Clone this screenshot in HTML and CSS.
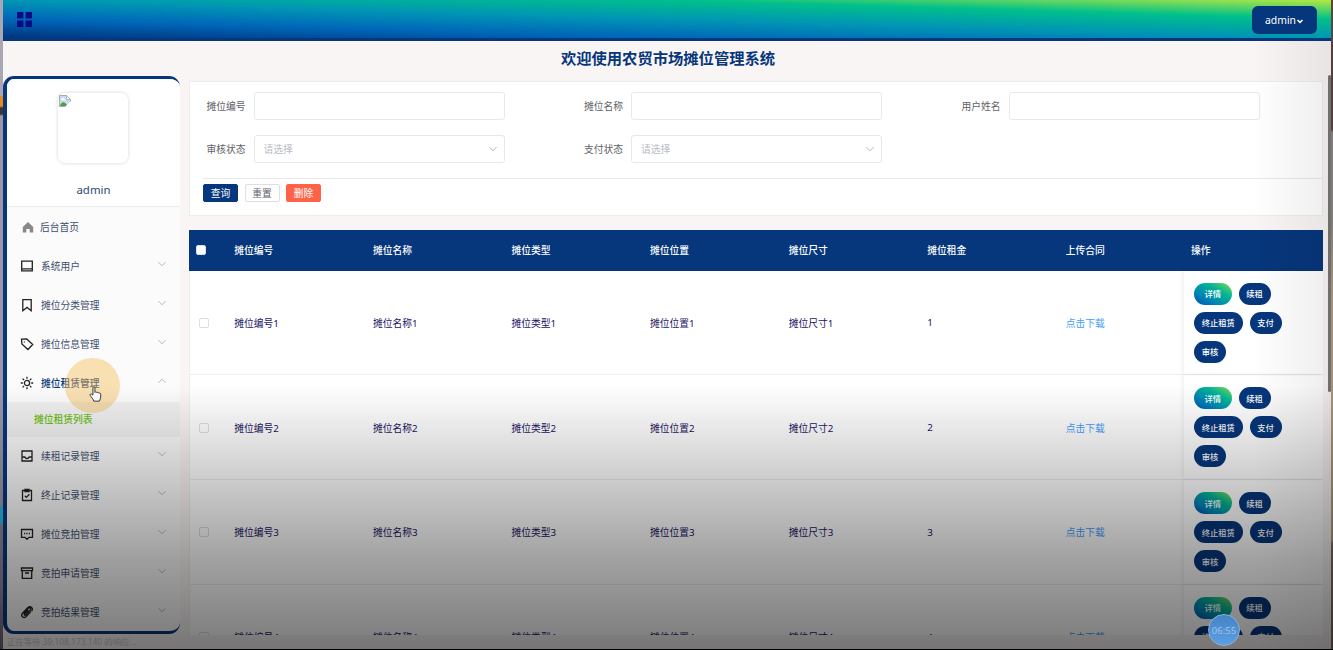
FILE: index.html
```html
<!DOCTYPE html>
<html lang="zh-CN">
<head>
    <meta charset="UTF-8" />
    <meta name="viewport" content="width=device-width, initial-scale=1" />
    <title>农贸市场摊位管理系统</title>
    <link rel="stylesheet" href="styles.css">
</head>
<body>
<div class="page">
    <header class="topbar">
        <svg class="grid-icon" viewBox="0 0 15 15"><path d="M0 0h6.4v6.4H0zM8.6 0H15v6.4H8.6zM0 8.6h6.4V15H0zM8.6 8.6H15V15H8.6z"/></svg>
        <button class="user-btn">admin<svg viewBox="0 0 8 8"><path d="M1.5 3L4 5.4 6.5 3"/></svg></button>
    </header>
    <h1 class="welcome">欢迎使用农贸市场摊位管理系统</h1>

    <div class="layout">
        <aside class="sidebar">
            <div class="profile">
                <div class="avatar">
                    <svg viewBox="0 0 12 12">
                        <path d="M.5.5h7l4 4v7H.5z" fill="#c9daf5" stroke="#9a9a9a" stroke-width=".8"/>
                        <path d="M1 11c1-4 4-5 6-2l2 2z" fill="#4aa33a"/>
                        <path d="M2 4.5c0-2 3-2 3.500-.6 1.500 0 1.300 1.400.3 1.400H2.500z" fill="#fff"/>
                        <path d="M7.500.5v4h4z" fill="#fff" stroke="#9a9a9a" stroke-width=".6"/>
                        <path d="M12 6L6 12h6z" fill="#fff"/>
                    </svg>
                </div>
                <p>admin</p>
            </div>
            <nav class="menu" id="menu"></nav>
        </aside>

        <main class="content">
            <form class="search">
                <div class="fields">
                    <div class="field"><label>摊位编号</label><span class="input"></span></div>
                    <div class="field"><label>摊位名称</label><span class="input"></span></div>
                    <div class="field"><label>用户姓名</label><span class="input"></span></div>
                    <div class="field"><label>审核状态</label><span class="input">请选择<svg class="arrow" viewBox="0 0 8 8"><path d="M.5 2.200L4 5.800 7.500 2.200"/></svg></span></div>
                    <div class="field"><label>支付状态</label><span class="input">请选择<svg class="arrow" viewBox="0 0 8 8"><path d="M.5 2.200L4 5.800 7.500 2.200"/></svg></span></div>
                </div>
                <div class="actions">
                    <button type="button" class="btn primary">查询</button>
                    <button type="button" class="btn">重置</button>
                    <button type="button" class="btn danger">删除</button>
                </div>
            </form>

            <div class="table" id="table">
                <div class="row head">
                    <span><i class="check"></i></span>
                    <span>摊位编号</span>
                    <span>摊位名称</span>
                    <span>摊位类型</span>
                    <span>摊位位置</span>
                    <span>摊位尺寸</span>
                    <span>摊位租金</span>
                    <span>上传合同</span>
                    <span class="ops">操作</span>
                </div>
            </div>
        </main>
    </div>
</div>

<div class="edge left"></div>
<div class="edge right"></div>
<div class="scrollbar"></div>
<div class="click-spot"></div>
<svg class="cursor" viewBox="0 0 12 15"><path d="M3.600 8.500V1.700c0-1.500 1.900-1.500 1.900 0V6c.3-.8 1.700-.6 1.800.3.500-.7 1.700-.4 1.800.5.700-.5 1.800-.1 1.800.9v2.600c0 1.600-.8 2.200-1.200 3.900H4.400C4.200 12.500 1.800 10.400 1 8.700.5 7.600 1.900 7 2.600 7.800z"/></svg>
<div class="status">正在等待 39.108.173.140 的响应...</div>
<div class="shade"></div>
<div class="timer">06:55</div>

<script src="script.js"></script>
</body>
</html>
```
FILE: styles.css
```css
* {
    margin: 0;
    padding: 0;
    box-sizing: border-box;
}
html, body {
    width: 1333px;
    height: 650px;
    overflow: hidden;
}
body {
    position: relative;
    background: #f9f5f4;
    color: #606266;
    font-family: "Noto Sans", "Noto Sans CJK SC", sans-serif;
    font-size: 9.75px;
}
button {
    font-family: inherit;
    border: 0;
}
svg {
    display: block;
}
.page {
    height: 635px;
    padding: 0 2px 0 3px;
    overflow: hidden;
}
.topbar {
    height: 41px;
    display: flex;
    align-items: flex-start;
    justify-content: space-between;
    padding: 6px 14px 0;
    border-bottom: 3px solid #06367b;
    background: linear-gradient(to top right, #00347c 0%, #0066b8 25%, #0096b4 50%, #00c08a 75%, #b4e840 100%);
}
.grid-icon {
    width: 15px;
    height: 15px;
    margin-top: 6px;
    fill: #0b0b86;
}
.user-btn {
    display: flex;
    align-items: center;
    justify-content: center;
    width: 65px;
    height: 28px;
    padding-bottom: 1px;
    border-radius: 6px;
    background: #06367b;
    color: #fff;
    font-size: 10.4px;
}
.user-btn svg {
    width: 8px;
    height: 8px;
    margin-top: 2px;
    fill: none;
    stroke: #fff;
    stroke-width: 1.5;
}
.welcome {
    height: 35px;
    line-height: 35px;
    text-align: center;
    font-size: 15.3px;
    font-weight: bold;
    color: #06367b;
    padding-left: 2px;
}
.layout {
    display: flex;
    align-items: flex-start;
    gap: 9px;
}

/* sidebar */
.sidebar {
    width: 177px;
    height: 558px;
    overflow: hidden;
    border: solid #06367b;
    border-width: 3px 0 3px 4px;
    border-radius: 11px;
    background: #fbfbfb;
}
.profile {
    height: 128px;
    padding-top: 13px;
    background: #fff;
    border-bottom: 1px solid #ececec;
    text-align: center;
}
.profile p {
    margin-top: 17px;
    line-height: 18px;
    font-size: 11.4px;
    color: #2b4a76;
}
.avatar {
    width: 72px;
    height: 72px;
    margin: 0 auto;
    padding: 2px 1px;
    border: 1px solid #eee;
    border-radius: 8px;
    box-shadow: 0 0 3px rgba(0, 0, 0, .1);
    position: relative;
    left: -1px;
}
.avatar svg {
    width: 12px;
    height: 12px;
}
.menu {
    padding-top: 1px;
}
.item {
    height: 38.9px;
    display: flex;
    align-items: center;
    padding: 0 14px 0 13px;
    color: #3d4f6b;
}
.item .icon {
    width: 14px;
    height: 14px;
    margin-right: 7px;
    fill: none;
    stroke: #222;
    stroke-width: 1.3;
}
.item .icon.home {
    margin: 0 5px 0 1px;
    fill: #888;
    stroke: none;
}
.item .arrow {
    margin: -4px 0 0 auto;
}
.item.open {
    color: #06367b;
    font-weight: 500;
}
.item.open .arrow {
    transform: rotate(180deg);
}
.sub {
    height: 34.5px;
    line-height: 36px;
    padding-left: 27px;
    background: #f1f1f1;
    color: #6cbf10;
    font-weight: 500;
}
.arrow {
    width: 8px;
    height: 8px;
    fill: none;
    stroke: #b4b8c0;
    stroke-width: 1;
}

/* search form */
.content {
    width: 1134px;
    padding-top: 5px;
}
.search {
    height: 135px;
    padding: 10px 0 0 13px;
    background: #fff;
    border: 1px solid #ededed;
}
.fields {
    display: grid;
    grid-template-columns: repeat(3, 377.5px);
    grid-auto-rows: 28px;
    row-gap: 15px;
    width: 1119px;
    height: 87px;
    border-bottom: 1px solid #e9e9e9;
}
.field {
    display: flex;
    align-items: center;
}
.field label {
    width: 50.500px;
    padding-left: 3.500px;
}
.input {
    display: flex;
    align-items: center;
    justify-content: space-between;
    width: 251px;
    height: 28px;
    padding: 0 7px 0 9px;
    border: 1px solid #e8e8ea;
    border-radius: 3px;
    color: #b9bcc4;
}
.actions {
    display: flex;
    gap: 6.500px;
    padding-top: 5px;
}
.btn {
    width: 35px;
    height: 18px;
    line-height: 17px;
    border: 1px solid #dcdfe6;
    border-radius: 2px;
    background: #fff;
    color: #606266;
    font-size: 9.75px;
}
.btn.primary {
    background: #06367b;
    border-color: #06367b;
    color: #fff;
}
.btn.danger {
    background: #ff6347;
    border-color: #ff6347;
    color: #fff;
}

/* table */
.table {
    margin-top: 14px;
    border-left: 1px solid #eee;
    background: #fff;
}
.row {
    display: grid;
    grid-template-columns: 37.300px repeat(6, 138.6px) 125.100px 139px;
    align-items: center;
    height: 104.800px;
    border-bottom: 1px solid #ebeef5;
    color: #1b1464;
}
.row > span {
    padding-left: 7px;
}
.row > span:first-child {
    padding-left: 9px;
}
.row:not(.head) > span {
    padding-top: 1px;
}
.row.head {
    height: 40.500px;
    border: 0;
    margin-left: -1px;
    padding-left: 1px;
    background: #06367b;
    color: #fff;
    font-weight: 500;
}
.row.head > span:first-child {
    padding-left: 6px;
}
.check {
    display: block;
    width: 10px;
    height: 10px;
    border: 1px solid #dcdfe6;
    border-radius: 2px;
    background: #fff;
}
.link {
    color: #409eff;
}
.row:not(.head) .ops {
    align-self: stretch;
    display: flex;
    flex-wrap: wrap;
    align-content: flex-start;
    gap: 7px;
    padding: 12px 30px 0 10px;
    box-shadow: -2px 0 4px rgba(0, 0, 0, .06);
}
.pill {
    height: 22px;
    padding: 0 7.700px 1px;
    border-radius: 11px;
    background: #06367b;
    color: #fff;
    font-size: 8.300px;
    font-weight: 500;
}
.pill.detail {
    padding: 0 10.500px 1px;
    background: linear-gradient(to top right, #0050b0, #0082b4 30%, #00b496 65%, #80dc50);
}

/* things lying over the page */
.edge {
    position: absolute;
    top: 0;
    height: 650px;
}
.edge.left {
    left: 0;
    width: 3px;
    background: linear-gradient(#aaa6b4 0 95px, #e08a20 97px 106px, #44342c 108px 114px, #9a96a8 116px 505px, #2ab8e0 507px 523px, #8d889c 525px 585px, #75607c);
}
.edge.right {
    right: 0;
    width: 2px;
    background: linear-gradient(#5a4440 0 130px, #8d8480 132px 220px, #b09c80 300px 540px, #806c68 545px);
}
.scrollbar {
    position: absolute;
    right: 2px;
    top: 75px;
    width: 3px;
    height: 317px;
    border-radius: 2px;
    background: #777;
}
.click-spot {
    position: absolute;
    left: 65px;
    top: 358px;
    width: 55px;
    height: 55px;
    border-radius: 50%;
    background: rgba(247, 190, 90, .45);
}
.cursor {
    position: absolute;
    left: 89px;
    top: 386px;
    width: 13px;
    height: 16px;
    fill: #fff;
    stroke: #333;
    stroke-width: .9;
}
.status {
    position: absolute;
    left: 7px;
    top: 635px;
    line-height: 13px;
    font-size: 8.400px;
    color: #c9c6c6;
}
.shade {
    position: absolute;
    inset: 0;
    border-bottom: 1px solid #000;
    background:
        linear-gradient(to left, rgba(0, 0, 0, .07), transparent 80px) 0 41px no-repeat,
        linear-gradient(transparent 385px, rgba(0, 0, 0, .15) 455px, rgba(0, 0, 0, .37) 560px, rgba(0, 0, 0, .52) 650px);
}
.timer {
    position: absolute;
    left: 1208px;
    top: 614px;
    width: 32px;
    height: 32px;
    line-height: 31px;
    border: 1px solid #8fb0d4;
    border-radius: 50%;
    background: linear-gradient(#4583c4, #5aa0e4);
    color: #a4c4e8;
    font-size: 9.5px;
    text-align: center;
}
```
FILE: script.js
```js
const icons = {
    home: '<path d="M7 2L1.800 7v5.500h3.500V9h3.400v3.500h3.500V7z"/>',
    screen: '<path d="M1.700 2.200h10.600v9.600H1.700zM1.700 9.800h10.600"/>',
    bookmark: '<path d="M2.800 1.700h8.400v11L7 9.400l-4.200 3.300z"/>',
    tag: '<path d="M1.500 2.200l5.200-.3 6 5.600-4.800 5-6-5.500zM4.400 4.500v.9"/>',
    sun: '<circle cx="7" cy="7" r="2.600"/><path d="M7 .8v2M7 11.200v2M.8 7h2M11.200 7h2M2.600 2.600L4 4M10 10l1.400 1.400M2.600 11.400L4 10M10 4l1.400-1.400"/>',
    inbox: '<path d="M2 2h10v10H2zM2 8h2.800c.5 2 3.900 2 4.400 0H12"/>',
    clipboard: '<path d="M2.500 2.500h9v10h-9zM5 1.500h4v2H5zM4.800 7.800l1.600 1.600 3-3.200"/>',
    chat: '<path d="M1.500 2.500h11v7.800H9L7 12.300l-2-2H1.500zM4 6.500h1.200M6.400 6.500h1.200M8.800 6.500H10"/>',
    box: '<path d="M1.500 2h11v2.600h-11zM2.300 4.600v7.700h9.400V4.600M5 7h4"/>',
    clip: '<path d="M3.500 8.300l4.700-4.900c1.600-1.500 3.500.3 2 1.900L5.600 10c-.9.800-1.900-.2-1.100-1L8.400 5M10.900 6.600l-5 5.100c-2.400 2.200-5.700-.9-3.400-3.400l5.200-5.500c2.800-2.700 6.400.8 3.800 3.300"/>'
};

const items = [
    ['home', '后台首页'],
    ['screen', '系统用户'],
    ['bookmark', '摊位分类管理'],
    ['tag', '摊位信息管理'],
    ['sun', '摊位租赁管理', '摊位租赁列表'],
    ['inbox', '续租记录管理'],
    ['clipboard', '终止记录管理'],
    ['chat', '摊位竞拍管理'],
    ['box', '竞拍申请管理'],
    ['clip', '竞拍结果管理']
];

const arrow = '<svg class="arrow" viewBox="0 0 8 8"><path d="M.5 2.200L4 5.800 7.500 2.200"/></svg>';

document.getElementById('menu').innerHTML = items.map(([icon, text, sub]) => `
    <div class="item${sub ? ' open' : ''}">
        <svg class="icon ${icon}" viewBox="0 0 14 14">${icons[icon]}</svg>${text}${icon === 'home' ? '' : arrow}
    </div>
    ${sub ? `<div class="sub">${sub}</div>` : ''}
`).join('');

const table = document.getElementById('table');
for (let n = 1; n <= 4; n++) {
    const row = document.createElement('div');
    row.className = 'row';
    row.innerHTML = `
        <span><i class="check"></i></span>
        <span>摊位编号${n}</span>
        <span>摊位名称${n}</span>
        <span>摊位类型${n}</span>
        <span>摊位位置${n}</span>
        <span>摊位尺寸${n}</span>
        <span>${n}</span>
        <span class="link">点击下载</span>
        <span class="ops">
            <button class="pill detail">详情</button>
            <button class="pill">续租</button>
            <button class="pill">终止租赁</button>
            <button class="pill">支付</button>
            <button class="pill">审核</button>
        </span>
    `;
    table.appendChild(row);
}
```
